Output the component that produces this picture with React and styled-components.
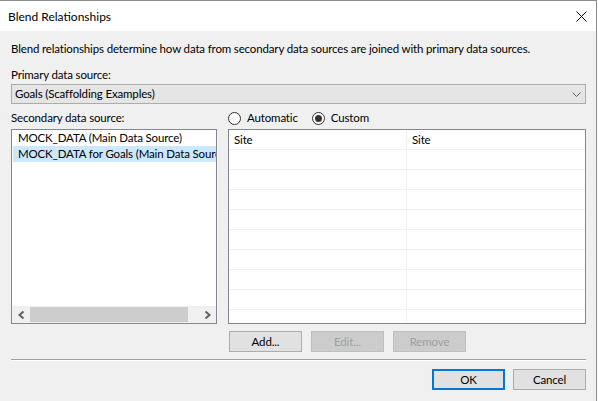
import React from "react";
import styled, { createGlobalStyle } from "styled-components";

const GlobalStyle = createGlobalStyle`
  html, body {
    margin: 0;
    padding: 0;
    background: #ffffff;
  }
  body {
    font-family: Lato, "Noto Sans", sans-serif;
    font-size: 11.5px;
    letter-spacing: -0.15px;
    color: #000000;
  }
  * {
    box-sizing: border-box;
  }
`;

const secondaryItems = [
  { id: 1, name: "MOCK_DATA (Main Data Source)" },
  { id: 2, name: "MOCK_DATA for Goals (Main Data Source)", selected: true },
];

const tableRows = Array.from({ length: 9 }, (_, i) => i);

const App = () => {
  return (
    <>
      <GlobalStyle />
      <Window>
        <TitleBar>
          <Title>Blend Relationships</Title>
          <CloseButton aria-label="Close">
            <svg width="11" height="11" viewBox="0 0 11 11">
              <path d="M0.5 0.5 L10.5 10.5 M10.5 0.5 L0.5 10.5" stroke="#000" strokeWidth="1" fill="none" />
            </svg>
          </CloseButton>
        </TitleBar>

        <Body>
          <Description>
            Blend relationships determine how data from secondary data sources are joined with primary data sources.
          </Description>

          <FieldLabel>Primary data source:</FieldLabel>
          <Dropdown>
            <span>Goals (Scaffolding Examples)</span>
            <svg width="9" height="5" viewBox="0 0 9 5">
              <path d="M0.5 0.5 L4.5 4.5 L8.5 0.5" stroke="#606060" strokeWidth="1" fill="none" />
            </svg>
          </Dropdown>

          <MidGrid>
            <HeadRow>Secondary data source:</HeadRow>
            <HeadRow>
              <Radio>
                <RadioCircle />
                Automatic
              </Radio>
              <Radio>
                <RadioCircle $checked />
                Custom
              </Radio>
            </HeadRow>

            <ListBox>
              <ListItems>
                {secondaryItems.map((item) => (
                  <ListItem key={item.id} $selected={item.selected}>
                    {item.name}
                  </ListItem>
                ))}
              </ListItems>
              <HScroll>
                <ScrollArrow>
                  <svg width="7" height="8" viewBox="0 0 7 8">
                    <path d="M5.5 0.5 L1.5 4 L5.5 7.5" stroke="#606060" strokeWidth="2" fill="none" />
                  </svg>
                </ScrollArrow>
                <ScrollTrack>
                  <ScrollThumb />
                </ScrollTrack>
                <ScrollArrow>
                  <svg width="7" height="8" viewBox="0 0 7 8">
                    <path d="M1.5 0.5 L5.5 4 L1.5 7.5" stroke="#606060" strokeWidth="2" fill="none" />
                  </svg>
                </ScrollArrow>
              </HScroll>
            </ListBox>

            <FieldTable>
              <TableRow>
                <Cell $first>Site</Cell>
                <Cell>Site</Cell>
              </TableRow>
              {tableRows.map((r) => (
                <TableRow key={r}>
                  <Cell $first />
                  <Cell />
                </TableRow>
              ))}
            </FieldTable>

            <ActionRow>
              <Button>Add...</Button>
              <Button disabled>Edit...</Button>
              <Button disabled>Remove</Button>
            </ActionRow>
          </MidGrid>

          <Separator />

          <Footer>
            <Button $primary>OK</Button>
            <Button>Cancel</Button>
          </Footer>
        </Body>
      </Window>
    </>
  );
};

export default App;

// styled-components
const Window = styled.div`
  width: 597px;
  height: 401px;
  border-top: 1px solid #8c8c8c;
  border-right: 1px solid #8c8c8c;
  background: #f0f0f0;
  display: flex;
  flex-direction: column;
`;

const TitleBar = styled.div`
  height: 30px;
  background: #ffffff;
  display: flex;
  align-items: center;
  justify-content: space-between;
  padding: 0 9px 0 8px;
`;

const Title = styled.span`
  font-size: 12px;
  letter-spacing: 0;
  line-height: 16px;
  margin-top: 1px;
`;

const CloseButton = styled.div`
  width: 11px;
  height: 11px;
  display: flex;
  margin-top: 1px;
`;

const Body = styled.div`
  flex: 1;
  display: flex;
  flex-direction: column;
  padding: 10px 10px 0 11px;
`;

const Description = styled.p`
  margin: 0;
  line-height: 16px;
  white-space: nowrap;
`;

const FieldLabel = styled.div`
  margin-top: 10px;
  margin-bottom: 1px;
  line-height: 16px;
`;

const Dropdown = styled.div`
  height: 20px;
  border: 1px solid #acacac;
  background: #e5e5e5;
  display: flex;
  align-items: center;
  justify-content: space-between;
  padding: 0 4px 0 3px;
  line-height: 16px;
`;

const MidGrid = styled.div`
  display: grid;
  grid-template-columns: 206px 1fr;
  column-gap: 11px;
`;

const HeadRow = styled.div`
  display: flex;
  align-items: center;
  gap: 14px;
  height: 16px;
  line-height: 16px;
  margin-top: 6px;
  margin-bottom: 3px;
`;

const Radio = styled.label`
  display: flex;
  align-items: center;
  gap: 6px;
`;

const RadioCircle = styled.span`
  width: 13px;
  height: 13px;
  border-radius: 50%;
  border: 1px solid #333333;
  background: #ffffff;
  display: flex;
  align-items: center;
  justify-content: center;

  &::after {
    content: "";
    display: ${(p) => (p.$checked ? "block" : "none")};
    width: 7px;
    height: 7px;
    border-radius: 50%;
    background: #333333;
  }
`;

const ListBox = styled.div`
  height: 195px;
  border: 1px solid #828790;
  background: #ffffff;
  display: flex;
  flex-direction: column;
`;

const ListItems = styled.div`
  flex: 1;
  padding: 0 0 0 1px;
  overflow: hidden;
`;

const ListItem = styled.div`
  height: 16px;
  line-height: 16px;
  padding-left: 5px;
  white-space: nowrap;
  overflow: hidden;
  background: ${(p) => (p.$selected ? "#cce8ff" : "transparent")};
`;

const HScroll = styled.div`
  height: 17px;
  background: #f0f0f0;
  display: flex;
  align-items: stretch;
`;

const ScrollArrow = styled.div`
  width: 18px;
  display: flex;
  align-items: center;
  justify-content: center;
`;

const ScrollTrack = styled.div`
  flex: 1;
  display: flex;
  align-items: center;
`;

const ScrollThumb = styled.div`
  width: 158px;
  height: 15px;
  background: #cdcdcd;
`;

const FieldTable = styled.div`
  height: 195px;
  border: 1px solid #828790;
  background: #ffffff;
  overflow: hidden;
`;

const TableRow = styled.div`
  display: grid;
  grid-template-columns: 178px 1fr;
  height: 20px;
  border-bottom: 1px solid #f0f0f0;
`;

const Cell = styled.div`
  padding-left: 5px;
  line-height: 19px;
  border-right: ${(p) => (p.$first ? "1px solid #f0f0f0" : "none")};
`;

const ActionRow = styled.div`
  grid-column: 2;
  display: flex;
  gap: 9px;
  margin-top: 7px;
  padding-left: 1px;
`;

const Button = styled.button`
  width: 73px;
  height: 21px;
  padding: 0;
  font-family: inherit;
  font-size: 11.5px;
  letter-spacing: inherit;
  color: #000000;
  background: #e1e1e1;
  border: 1px solid #adadad;
  ${(p) => p.$primary && "border: 2px solid #0078d7;"}

  &:disabled {
    color: #a0a0a0;
    background: #cccccc;
    border-color: #bfbfbf;
  }
`;

const Separator = styled.div`
  height: 2px;
  margin-top: 7px;
  border-top: 1px solid #a0a0a0;
  border-bottom: 1px solid #ffffff;
`;

const Footer = styled.div`
  display: flex;
  justify-content: flex-end;
  gap: 8px;
  margin-top: 8px;
`;
